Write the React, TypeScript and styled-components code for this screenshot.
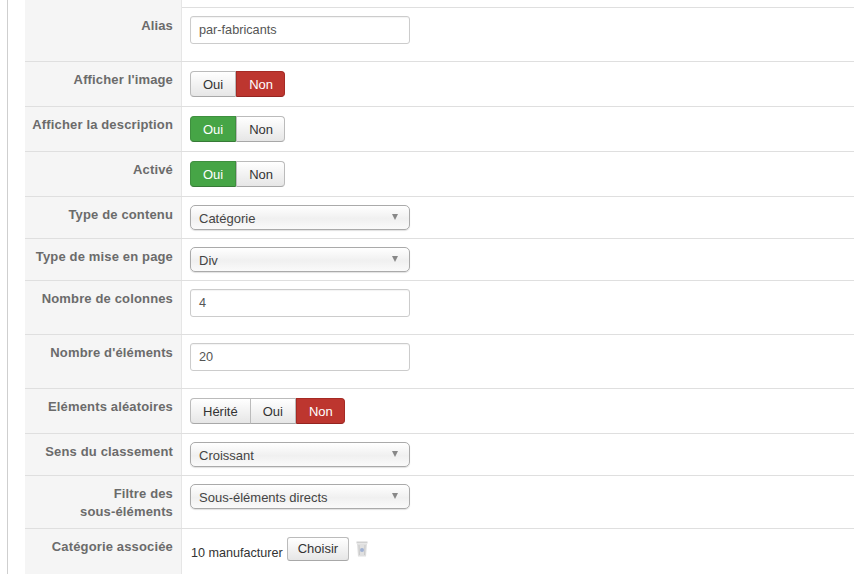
import React from 'react'
import styled, { createGlobalStyle } from 'styled-components'

const GlobalStyle = createGlobalStyle`
  html, body {
    margin: 0;
    padding: 0;
    height: 574px;
    overflow: hidden;
    background: #fff;
    font-family: "Liberation Sans", Arial, sans-serif;
    font-size: 13px;
  }
`

const Page = styled.div`
  margin-left: 7px;
  height: 574px;
  overflow: hidden;
  border-left: 1px solid #cfcfcf;
  padding-left: 17px;
`

const Row = styled.div<{ $height: number }>`
  display: grid;
  grid-template-columns: 157px 1fr;
  height: ${p => p.$height}px;
  box-sizing: border-box;
  border-top: 1px solid #dfdfdf;

  &:first-child {
    border-top: none;
  }
`

const Label = styled.div`
  background: #f5f5f5;
  border-right: 1px solid #e6e6e6;
  padding: 9px 8px 0 0;
  text-align: right;
  font-weight: 700;
  font-size: 13px;
  letter-spacing: 0.15px;
  line-height: 18px;
  color: #6b6b6b;
`

const Field = styled.div<{ $top: number }>`
  display: flex;
  align-items: flex-start;
  padding: ${p => p.$top}px 0 0 8px;
`

const TextInput = styled.div`
  box-sizing: border-box;
  width: 220px;
  height: 28px;
  padding: 0 8px;
  border: 1px solid #ccc;
  border-radius: 3px;
  box-shadow: inset 0 1px 1px rgba(0, 0, 0, 0.05);
  line-height: 26px;
  font-size: 12.7px;
  color: #555;
`

const Toggle = styled.div`
  display: flex;
`

const Choice = styled.div<{ $state?: 'yes' | 'no' }>`
  box-sizing: border-box;
  height: 26px;
  padding: 0 12px;
  margin-left: -1px;
  line-height: 25px;
  font-size: 13px;
  border: 1px solid ${p => (p.$state === 'yes' ? '#3f8f3f' : p.$state === 'no' ? '#a52a24' : '#bbb')};
  border-bottom-color: ${p => (p.$state === 'yes' ? '#377a37' : p.$state === 'no' ? '#942420' : '#a8a8a8')};
  color: ${p => (p.$state ? '#fff' : '#333')};
  background: ${p =>
    p.$state === 'yes'
      ? '#46a546'
      : p.$state === 'no'
        ? '#bd362f'
        : 'linear-gradient(to bottom, #fff, #e6e6e6)'};

  &:first-child {
    margin-left: 0;
    border-radius: 4px 0 0 4px;
  }

  &:last-child {
    margin-left: 0;
    padding-right: 11px;
    border-radius: 0 4px 4px 0;
  }
`

const Select = styled.div`
  box-sizing: border-box;
  display: flex;
  align-items: center;
  justify-content: space-between;
  width: 220px;
  height: 25px;
  padding: 1px 11px 0 8px;
  border: 1px solid #aaa;
  border-radius: 5px;
  background: linear-gradient(to bottom, #fff 0, #f0f0f0 55%, #fafafa 100%);
  box-shadow: 0 1px 1px rgba(0, 0, 0, 0.12);
  font-size: 13px;
  color: #444;
`

const Caret = styled.span`
  width: 0;
  height: 0;
  margin-top: -3px;
  border-left: 3.5px solid transparent;
  border-right: 3.5px solid transparent;
  border-top: 6px solid #888;
`

const Chosen = styled.span`
  margin: 9px 4px 0 1px;
  font-size: 12.6px;
  line-height: 14px;
  color: #333;
`

const Button = styled.div`
  box-sizing: border-box;
  height: 24px;
  padding: 0 10px;
  border: 1px solid #bbb;
  border-bottom-color: #a8a8a8;
  border-radius: 3px;
  background: linear-gradient(to bottom, #fff, #e6e6e6);
  line-height: 22px;
  font-size: 13px;
  color: #333;
`

const TrashIcon = styled.svg`
  margin: 4px 0 0 7px;
`

const Trash = () => (
  <TrashIcon width="12" height="16" viewBox="0 0 12 16">
    <rect x="0.5" y="0.5" width="11" height="2" fill="#d0d0d0" />
    <path d="M1 3h10l-1 12.5H2z" fill="#e0e0e0" />
    <path d="M3 4l.4 10M9 4l-.4 10" stroke="#c8c8c8" strokeWidth="1" fill="none" />
    <circle cx="6" cy="9" r="2" fill="#9fb0d2" />
  </TrashIcon>
)

type ChoiceItem = { text: string; state?: 'yes' | 'no' }

const YesNo = ({ items }: { items: ChoiceItem[] }) => (
  <Toggle>
    {items.map(item => (
      <Choice key={item.text} $state={item.state}>{item.text}</Choice>
    ))}
  </Toggle>
)

const SelectBox = ({ value }: { value: string }) => (
  <Select>
    {value}
    <Caret />
  </Select>
)

export default function App() {
  return (
    <>
      <GlobalStyle />
      <Page>
        <Row $height={7}>
          <Label />
          <div />
        </Row>
        <Row $height={54}>
          <Label>Alias</Label>
          <Field $top={8}><TextInput>par-fabricants</TextInput></Field>
        </Row>
        <Row $height={45}>
          <Label>Afficher l'image</Label>
          <Field $top={9}><YesNo items={[{ text: 'Oui' }, { text: 'Non', state: 'no' }]} /></Field>
        </Row>
        <Row $height={45}>
          <Label>Afficher la description</Label>
          <Field $top={9}><YesNo items={[{ text: 'Oui', state: 'yes' }, { text: 'Non' }]} /></Field>
        </Row>
        <Row $height={45}>
          <Label>Activé</Label>
          <Field $top={9}><YesNo items={[{ text: 'Oui', state: 'yes' }, { text: 'Non' }]} /></Field>
        </Row>
        <Row $height={42}>
          <Label>Type de contenu</Label>
          <Field $top={8}><SelectBox value="Catégorie" /></Field>
        </Row>
        <Row $height={42}>
          <Label>Type de mise en page</Label>
          <Field $top={8}><SelectBox value="Div" /></Field>
        </Row>
        <Row $height={54}>
          <Label>Nombre de colonnes</Label>
          <Field $top={8}><TextInput>4</TextInput></Field>
        </Row>
        <Row $height={54}>
          <Label>Nombre d'éléments</Label>
          <Field $top={8}><TextInput>20</TextInput></Field>
        </Row>
        <Row $height={45}>
          <Label>Eléments aléatoires</Label>
          <Field $top={9}>
            <YesNo items={[{ text: 'Hérité' }, { text: 'Oui' }, { text: 'Non', state: 'no' }]} />
          </Field>
        </Row>
        <Row $height={42}>
          <Label>Sens du classement</Label>
          <Field $top={8}><SelectBox value="Croissant" /></Field>
        </Row>
        <Row $height={53}>
          <Label>Filtre des<br />sous-éléments</Label>
          <Field $top={8}><SelectBox value="Sous-éléments directs" /></Field>
        </Row>
        <Row $height={46}>
          <Label>Catégorie associée</Label>
          <Field $top={8}>
            <Chosen>10 manufacturer</Chosen>
            <Button>Choisir</Button>
            <Trash />
          </Field>
        </Row>
      </Page>
    </>
  )
}
